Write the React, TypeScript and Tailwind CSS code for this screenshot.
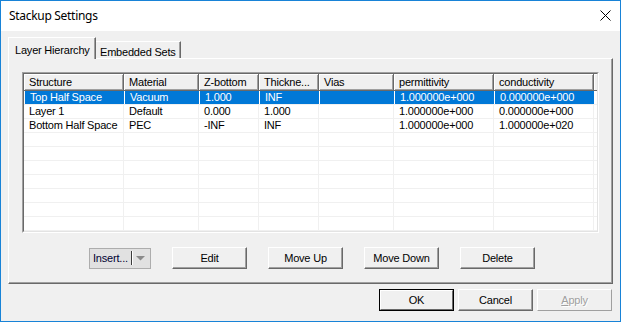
import React from "react";

const cols = [
  { label: "Structure", w: "w-[100px]" },
  { label: "Material", w: "w-[75px]" },
  { label: "Z-bottom", w: "w-[60px]" },
  { label: "Thickne...", w: "w-[60px]" },
  { label: "Vias", w: "w-[75px]" },
  { label: "permittivity", w: "w-[100px]" },
  { label: "conductivity", w: "w-[100px]" },
];

const rows = [
  ["Top Half Space", "Vacuum", "1.000", "INF", "", "1.000000e+000", "0.000000e+000"],
  ["Layer 1", "Default", "0.000", "1.000", "", "1.000000e+000", "0.000000e+000"],
  ["Bottom Half Space", "PEC", "-INF", "INF", "", "1.000000e+000", "1.000000e+020"],
  ["", "", "", "", "", "", ""],
  ["", "", "", "", "", "", ""],
  ["", "", "", "", "", "", ""],
  ["", "", "", "", "", "", ""],
  ["", "", "", "", "", "", ""],
  ["", "", "", "", "", "", ""],
  ["", "", "", "", "", "", ""],
];

const btn3d =
  "w-[75px] h-[22px] flex items-center justify-center bg-[#f0f0f0] border border-t-white border-l-white border-r-[#696969] border-b-[#696969] shadow-[inset_-1px_-1px_0_#a0a0a0]";

function Button({ children }: { children: React.ReactNode }) {
  return <div className={`${btn3d} text-black`}>{children}</div>;
}

export default function App() {
  return (
    <div
      className="w-[621px] h-[322px] flex flex-col bg-[#f0f0f0] border border-[#1883d7] text-[11px] tracking-[-0.2px] text-black overflow-hidden"
      style={{ fontFamily: '"Liberation Sans", Arial, sans-serif' }}
    >
      {/* title bar */}
      <div className="h-[30px] bg-white flex items-center justify-between pl-[8px] pr-[9px]">
        <span
          className="text-[12px] tracking-[-0.3px] text-black"
          style={{ fontFamily: '"Noto Sans", "Open Sans", sans-serif' }}
        >
          Stackup Settings
        </span>
        <svg width="11" height="11" viewBox="0 0 11 11" className="mt-[-2px]">
          <path d="M0.5 0.5 L10.5 10.5 M10.5 0.5 L0.5 10.5" stroke="#000" strokeWidth="1" />
        </svg>
      </div>

      <div className="flex-1 flex flex-col px-[7px] pt-[6px]">
        {/* tabs */}
        <div className="flex items-end h-[21px]">
          <div className="relative z-10 w-[88px] h-[22px] mb-[-1px] bg-[#f0f0f0] border-t border-l border-white border-r border-r-[#696969] shadow-[inset_-1px_0_0_#a0a0a0] pl-[6px] pt-[4px] whitespace-nowrap">
            Layer Hierarchy
          </div>
          <div className="w-[85px] h-[17px] bg-[#f0f0f0] border-t border-t-white border-r border-r-[#696969] shadow-[inset_-1px_0_0_#a0a0a0] pl-[4px] pt-[2px] whitespace-nowrap">
            Embedded Sets
          </div>
        </div>

        {/* panel */}
        <div className="h-[226px] flex flex-col border border-t-white border-l-white border-r-[#696969] border-b-[#696969] shadow-[inset_-1px_-1px_0_#a0a0a0] pl-[13px] pt-[13px]">
          <div className="w-[577px] h-[161px] border border-t-[#a0a0a0] border-l-[#a0a0a0] border-r-white border-b-white">
            <div className="w-full h-full bg-white border border-t-[#696969] border-l-[#696969] border-r-[#e3e3e3] border-b-[#e3e3e3] overflow-hidden">
              {/* header */}
              <div className="flex h-[17px]">
                {cols.map((c) => (
                  <div
                    key={c.label}
                    className={`${c.w} shrink-0 h-full bg-[#f0f0f0] border-r border-b border-[#696969] shadow-[inset_1px_1px_0_#fff,inset_-1px_-1px_0_#a0a0a0] pl-[5px] leading-[16px] whitespace-nowrap overflow-hidden`}
                  >
                    {c.label}
                  </div>
                ))}
                <div className="flex-1 h-full bg-[#f0f0f0] border-b border-[#696969] shadow-[inset_1px_1px_0_#fff]" />
              </div>
              {/* rows */}
              {rows.map((r, i) => {
                const sel = i === 0;
                return (
                  <div key={i} className="flex h-[14px] border-b border-[#f0f0f0]">
                    {r.map((v, j) => (
                      <div
                        key={j}
                        className={`${cols[j].w} shrink-0 h-full border-r pl-[5px] leading-[13px] whitespace-nowrap overflow-hidden ${
                          sel ? "bg-[#0078d7] text-white border-white" : "border-[#f0f0f0]"
                        } ${sel && j === 0 ? "ml-[1px] w-[99px]" : ""}`}
                      >
                        {v}
                      </div>
                    ))}
                    <div className="flex-1" />
                  </div>
                );
              })}
            </div>
          </div>

          {/* action buttons */}
          <div className="flex items-center gap-[21px] mt-[14px] pl-[67px]">
            <div className="w-[62px] h-[21px] flex items-center bg-[#e1e1e1] border border-[#adadad] pl-[3px]">
              <span className="text-[#000033]">Insert...</span>
              <div className="ml-[3px] w-[1px] h-[14px] bg-[#3c3c3c]" />
              <div className="w-[1px] h-[14px] bg-white" />
              <svg width="10" height="5" viewBox="0 0 10 5" className="ml-[3px]">
                <path d="M0 0 L9 0 L4.5 4.5 Z" fill="#8a8a8a" />
              </svg>
            </div>
            <Button>Edit</Button>
            <Button>Move Up</Button>
            <Button>Move Down</Button>
            <Button>Delete</Button>
          </div>
        </div>

        {/* dialog buttons */}
        <div className="flex justify-end gap-[4px] mt-[5px] pr-[1px]">
          <div className="w-[75px] h-[22px] border border-black">
            <div className="w-full h-full flex items-center justify-center bg-[#f0f0f0] border border-t-white border-l-white border-r-[#696969] border-b-[#696969]">
              OK
            </div>
          </div>
          <Button>Cancel</Button>
          <div className="w-[75px] h-[22px] flex items-center justify-center bg-[#f0f0f0] border border-t-white border-l-white border-r-[#a0a0a0] border-b-[#a0a0a0] text-[#a0a0a0] [text-shadow:1px_1px_0_#fff]">
            <span>
              <span className="underline">A</span>pply
            </span>
          </div>
        </div>
      </div>
    </div>
  );
}
